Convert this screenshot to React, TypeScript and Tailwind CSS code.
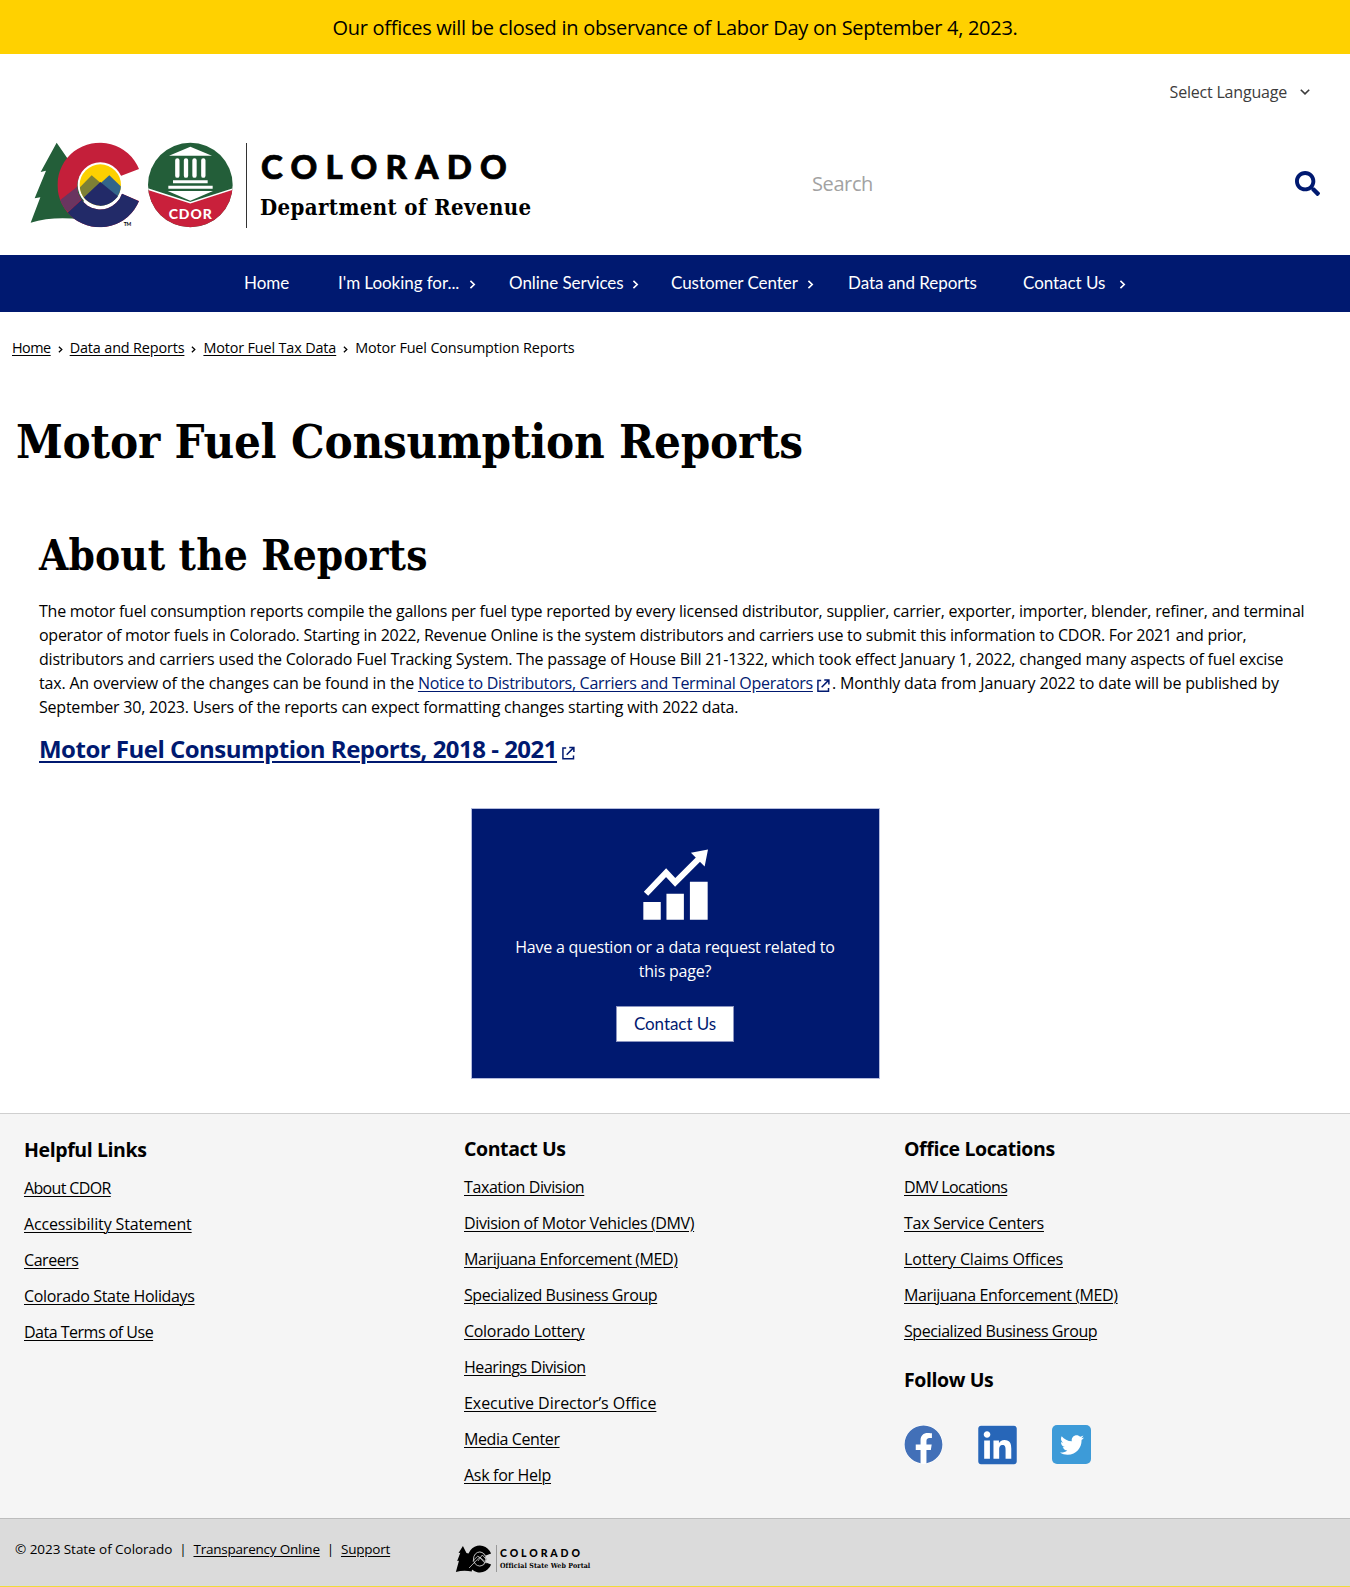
import { FaFacebook, FaLinkedin, FaSearch, FaTwitter } from "react-icons/fa";

const helpful = [
  { label: "About CDOR", tracking: "tracking-[-0.65px]" },
  { label: "Accessibility Statement", tracking: "tracking-[-0.14px]" },
  { label: "Careers", tracking: "tracking-[-0.45px]" },
  { label: "Colorado State Holidays", tracking: "tracking-[-0.34px]" },
  { label: "Data Terms of Use", tracking: "tracking-[-0.5px]" },
];
const contact = [
  { label: "Taxation Division", tracking: "tracking-[-0.4px]" },
  { label: "Division of Motor Vehicles (DMV)", tracking: "tracking-[-0.37px]" },
  { label: "Marijuana Enforcement (MED)", tracking: "tracking-[-0.39px]" },
  { label: "Specialized Business Group", tracking: "tracking-[-0.42px]" },
  { label: "Colorado Lottery", tracking: "tracking-[-0.3px]" },
  { label: "Hearings Division", tracking: "tracking-[-0.45px]" },
  { label: "Executive Director’s Office", tracking: "tracking-[-0.05px]" },
  { label: "Media Center", tracking: "tracking-[-0.4px]" },
  { label: "Ask for Help", tracking: "tracking-[-0.3px]" },
];
const offices = [
  { label: "DMV Locations", tracking: "tracking-[-0.6px]" },
  { label: "Tax Service Centers", tracking: "tracking-[-0.27px]" },
  { label: "Lottery Claims Offices", tracking: "tracking-[-0.15px]" },
  { label: "Marijuana Enforcement (MED)", tracking: "tracking-[-0.39px]" },
  { label: "Specialized Business Group", tracking: "tracking-[-0.42px]" },
];

const nav = [
  { label: "Home", width: "w-[94px]", text: "" },
  { label: "I'm Looking for...", width: "w-[171px]", text: "w-[131px]" },
  { label: "Online Services", width: "w-[162px]", text: "w-[123px]" },
  { label: "Customer Center", width: "w-[177px]", text: "w-[136px]" },
  { label: "Data and Reports", width: "w-[175px]", text: "" },
  { label: "Contact Us", width: "w-[104px]", text: "w-[96px]" },
];

function ChevronRight({ className }: { className: string }) {
  return (
    <svg viewBox="0 0 7 10" className={className} fill="none" stroke="currentColor" strokeWidth="1.8">
      <path d="M1.2 1 5.4 5 1.2 9" />
    </svg>
  );
}

function External({ className }: { className: string }) {
  return (
    <svg viewBox="0 0 14 14" className={className} fill="none" stroke="currentColor" strokeWidth="1.6">
      <path d="M4.5 1.6H1v11.6h11.4V9.6" />
      <path d="M7.8 1h5v5M12.6 1.2 5 8.8" />
    </svg>
  );
}

function StateLogo() {
  return (
    <svg viewBox="90 66 612 258" className="h-[86px] w-[204px] shrink-0">
      <path d="M170 68 122 156l16-4-34 83 17-3-29 76c44-14 98-16 150-10l20-120-62-66z" fill="#235e39" />
      <clipPath id="cshape">
        <path d="M417 147A127 127 0 1 0 417 243L366 221A69 69 0 1 1 362 168Z" />
      </clipPath>
      <g clipPath="url(#cshape)">
        <rect x="170" y="60" width="260" height="270" fill="#c41f3a" />
        <path d="M205 276 300 188 430 250V330H170Z" fill="#222a68" />
        <path d="M170 248 245 190 260 222 205 276Z" fill="#6a3560" />
      </g>
      <circle cx="301" cy="195" r="68" fill="#fff" />
      <clipPath id="sky">
        <circle cx="301" cy="195" r="62" />
      </clipPath>
      <g clipPath="url(#sky)">
        <rect x="235" y="130" width="132" height="132" fill="#fdd000" />
        <path d="M230 212 275 166 310 196 250 260H230Z" fill="#7d8035" />
        <path d="M290 200 328 166 370 206V260H300Z" fill="#33658a" />
        <path d="M220 262 301 186 345 222 370 240V270H220Z" fill="#222a68" />
      </g>
      <text x="371" y="319" fontSize="15" fontWeight="700" fontFamily="Lato, sans-serif">TM</text>
      <clipPath id="seal">
        <circle cx="571" cy="195" r="127" />
      </clipPath>
      <g clipPath="url(#seal)">
        <rect x="440" y="60" width="262" height="262" fill="#235e39" />
        <path d="M440 207 571 249 702 207V330H440Z" fill="#c9203b" />
        <path d="M440 206 571 248 702 206" fill="none" stroke="#fff" strokeWidth="4.5" />
      </g>
      <path d="M507 107 571 80 636 107Z" fill="#fff" />
      <path d="M532 121V167M558 121V167M583.5 121V167M610 121V167" stroke="#fff" strokeWidth="13" strokeLinecap="round" />
      <path d="M519 185H623M505 202H638" stroke="#fff" strokeWidth="9" />
      <path d="M503 213H639L571 242Z" fill="#fff" />
      <text x="506" y="297" fontSize="42" fontWeight="900" letterSpacing="2.5" textLength="132" fill="#fff" fontFamily="Lato, sans-serif">CDOR</text>
    </svg>
  );
}

function SmallLogo() {
  return (
    <svg viewBox="0 0 42 28" className="h-[28px] w-[37px] shrink-0" preserveAspectRatio="none">
      <path d="M9 1 4 8l2-.3L2.5 16l2-.2L1 27c6-1.500 12-1.500 18-.5L22 10 13 8z" />
      <path d="M41 8.500A14 13.500 0 1 0 41 19.500L35 17.500A7.500 7.200 0 1 1 35 10.500Z" />
      <circle cx="28" cy="14" r="7.500" />
      <circle cx="28" cy="14" r="7" fill="none" stroke="#ddd" strokeWidth=".9" />
      <path d="M16 23 28 12l8 6M20 16l6-5 8 7M26 16l5-6 4 4" fill="none" stroke="#ddd" strokeWidth=".8" />
    </svg>
  );
}

function Links({ items }: { items: { label: string; tracking: string }[] }) {
  return (
    <ul>
      {items.map((t) => (
        <li key={t.label} className="h-[36px] leading-[36px]">
          <a className={`underline decoration-1 underline-offset-2 ${t.tracking}`}>{t.label}</a>
        </li>
      ))}
    </ul>
  );
}

const footHeading = "text-[19.5px] font-bold tracking-[-0.4px] leading-[28px]";

export default function App() {
  return (
    <div className="flex h-[1587px] w-[1350px] flex-col overflow-hidden bg-white font-['Open_Sans',sans-serif] text-[16px] tracking-[-0.26px] text-black">
      <div className="h-[54px] shrink-0 bg-[#ffd100] text-center text-[20px] leading-[55px] tracking-[-0.28px]">
        Our offices will be closed in observance of Labor Day on September 4, 2023.
      </div>

      <header className="flex h-[201px] shrink-0 flex-col">
        <div className="flex h-[76px] items-center justify-end pr-[40px] text-[#3c3c3c]">
          <span className="tracking-[-0.2px]">Select Language</span>
          <svg viewBox="0 0 10 6" className="ml-[13px] h-[6px] w-[10px]" fill="none" stroke="currentColor" strokeWidth="1.6">
            <path d="M.8.8 5 4.900 9.200.8" />
          </svg>
        </div>
        <div className="flex h-[110px] items-center pl-[30px] pr-[30px]">
          <StateLogo />
          <div className="ml-[12px] h-[85px] w-px bg-[#333]" />
          <div className="ml-[13px] flex h-[86px] w-[290px] flex-col whitespace-nowrap">
            <div className="mt-[4px] pl-px font-['Lato',sans-serif] text-[33px] font-black leading-[40px] tracking-[8.3px] [-webkit-text-stroke:0.7px_#000]">COLORADO</div>
            <div className="mt-[6px] font-['DejaVu_Serif_Condensed','DejaVu_Serif',serif] text-[22px] font-bold leading-[30px] tracking-[0.4px]">
              Department of Revenue
            </div>
          </div>
          <div className="mb-[2px] ml-[262px] grow text-[20px] tracking-[-0.4px] text-[#a2a2a2]">Search</div>
          <FaSearch className="mb-[3px] size-[25px] text-[#001970]" />
        </div>
      </header>

      <nav className="flex h-[57px] shrink-0 items-center bg-[#001970] pb-px pl-[244px] font-['Lato',sans-serif] text-[17px] tracking-[-0.05px] text-white">
        {nav.map((n) => (
          <a key={n.label} className={`flex shrink-0 items-center whitespace-nowrap ${n.width}`}>
            <span className={`shrink-0 ${n.text}`}>{n.label}</span>
            {n.text && <ChevronRight className="mt-[3px] h-[9px] w-[7px]" />}
          </a>
        ))}
      </nav>

      <div className="mt-[24px] flex h-[24px] shrink-0 items-center pl-[12px] text-[14.4px] tracking-[-0.14px]">
        <a className="tracking-[-0.5px] underline underline-offset-2">Home</a>
        <ChevronRight className="mx-[7px] mt-[2px] h-[7px] w-[5px]" />
        <a className="underline underline-offset-2">Data and Reports</a>
        <ChevronRight className="mx-[7px] mt-[2px] h-[7px] w-[5px]" />
        <a className="underline underline-offset-2">Motor Fuel Tax Data</a>
        <ChevronRight className="mx-[7px] mt-[2px] h-[7px] w-[5px]" />
        <span>Motor Fuel Consumption Reports</span>
      </div>

      <h1 className="mt-[52px] shrink-0 pl-[16px] font-['DejaVu_Serif_Condensed','DejaVu_Serif',serif] text-[47px] font-bold leading-[60px] tracking-[-0.22px]">
        Motor Fuel Consumption Reports
      </h1>

      <main className="mt-[56px] h-[585px] shrink-0 px-[39px]">
        <h2 className="font-['DejaVu_Serif_Condensed','DejaVu_Serif',serif] text-[42px] font-bold leading-[56px] tracking-[0.1px]">About the Reports</h2>
        <p className="mt-[15px] whitespace-nowrap leading-[24px]">
          <span className="tracking-[-0.23px]">The motor fuel consumption reports compile the gallons per fuel type reported by every licensed distributor, supplier, carrier, exporter, importer, blender, refiner, and terminal</span>
          <br />
          operator of motor fuels in Colorado. Starting in 2022, Revenue Online is the system distributors and carriers use to submit this information to CDOR. For 2021 and prior,
          <br />
          <span className="tracking-[-0.2px]">distributors and carriers used the Colorado Fuel Tracking System. The passage of House Bill 21-1322, which took effect January 1, 2022, changed many aspects of fuel excise</span>
          <br />
          <span className="tracking-[-0.18px]">tax. An overview of the changes can be found in the </span>
          <a className="tracking-[-0.29px] text-[#001970] underline underline-offset-2">Notice to Distributors, Carriers and Terminal Operators</a>
          <External className="ml-[4px] mr-[2px] inline-block h-[13px] w-[13px] align-[-3px] text-[#001970]" />
          <span className="tracking-[-0.17px]">. Monthly data from January 2022 to date will be published by</span>
          <br />
          <span className="tracking-[-0.22px]">September 30, 2023. Users of the reports can expect formatting changes starting with 2022 data.</span>
        </p>
        <h3 className="mt-[12px] flex items-center text-[24px] font-bold leading-[36px] tracking-[-0.51px] text-[#001970]">
          <a className="underline decoration-2 underline-offset-3">Motor Fuel Consumption Reports, 2018 - 2021</a>
          <External className="ml-[5px] mt-[7px] h-[14px] w-[13px]" />
        </h3>
        <section className="mx-auto mt-[41px] flex h-[271px] w-[409px] flex-col items-center border border-[#b4bbdc] bg-[#001970] text-white">
          <svg viewBox="548 149 194 211" className="mt-[40px] h-[71px] w-[65px] shrink-0" fill="#fff">
            <path d="M549 307h52v53h-52zM618 282h52v78h-52zM688 246h53v114h-53zM742 150l-51 10 41 41z" />
            <path d="M557 282 617 219 644 248 718 174" fill="none" stroke="#fff" strokeWidth="18" />
          </svg>
          <p className="mt-[15px] text-center leading-[24px] tracking-[-0.22px]">
            Have a question or a data request related to
            <br />
            this page?
          </p>
          <button className="mt-[23px] h-[36px] w-[118px] border border-[#8c95c0] bg-white font-['Lato',sans-serif] text-[17px] tracking-[-0.06px] text-[#001970]">
            Contact Us
          </button>
        </section>
      </main>

      <footer className="mt-auto shrink-0">
        <div className="flex h-[405px] border-t border-[#cfcfcf] bg-[#f5f5f5] pl-[24px] tracking-[-0.34px]">
          <div className="w-[440px] pt-[22px]">
            <h4 className={footHeading}>Helpful Links</h4>
            <div className="mt-[6px]">
              <Links items={helpful} />
            </div>
          </div>
          <div className="w-[440px] pt-[21px]">
            <h4 className={footHeading}>Contact Us</h4>
            <div className="mt-[6px]">
              <Links items={contact} />
            </div>
          </div>
          <div className="pt-[21px]">
            <h4 className={footHeading}>Office Locations</h4>
            <div className="mt-[6px]">
              <Links items={offices} />
            </div>
            <h4 className={`mt-[17px] ${footHeading}`}>Follow Us</h4>
            <div className="mt-[31px] flex h-[39px] items-center">
              <span className="flex size-[39px] items-center justify-center rounded-full bg-white">
                <FaFacebook className="size-[39px] text-[#4270b8]" />
              </span>
              <span className="ml-[35px] flex size-[39px] items-center justify-center rounded-[4px] bg-white">
                <FaLinkedin className="h-[44px] w-[39px] shrink-0 text-[#2766b8]" />
              </span>
              <span className="ml-[35px] flex size-[39px] items-center justify-center rounded-[5px] bg-[#3d9bd8]">
                <FaTwitter className="size-[24px] text-white" />
              </span>
            </div>
          </div>
        </div>
        <div className="flex h-[68px] items-center border-t border-[#bdbdbd] bg-[#dbdbdb] pl-[15px] text-[13.500px] tracking-[-0.22px]">
          <div className="mb-[7px] flex w-[440px] items-center whitespace-pre">
            <span className="tracking-[-0.05px]">© 2023 State of Colorado</span>
            <span className="mx-[7px]">|</span>
            <a className="underline underline-offset-2">Transparency Online</a>
            <span className="mx-[7px]">|</span>
            <a className="underline underline-offset-2">Support</a>
          </div>
          <div className="mt-[12px] flex items-center">
            <SmallLogo />
            <div className="ml-[4px] h-[27px] w-px bg-[#999]" />
            <div className="ml-[3px] whitespace-nowrap">
              <div className="font-['Lato',sans-serif] text-[10.5px] font-black leading-[14px] tracking-[2.9px]">COLORADO</div>
              <div className="font-['DejaVu_Serif_Condensed','DejaVu_Serif',serif] text-[7px] font-bold leading-[12px] tracking-[0.12px]">Official State Web Portal</div>
            </div>
          </div>
        </div>
        <div className="h-px bg-[#f0dc3a]" />
      </footer>
    </div>
  );
}
